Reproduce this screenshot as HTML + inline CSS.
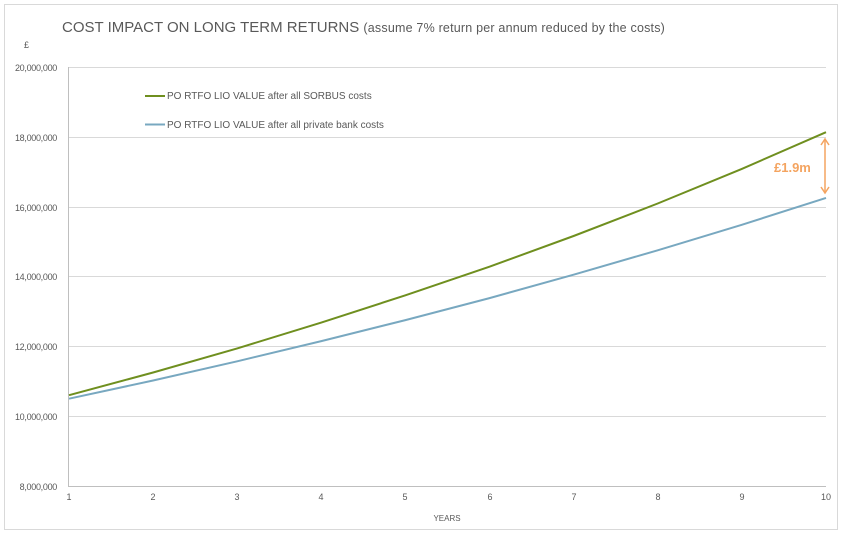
<!DOCTYPE html>
<html><head><style>
body{margin:0;width:842px;height:535px;background:#fff;overflow:hidden}
svg{display:block}
text{font-family:"Liberation Sans",sans-serif}
</style></head><body>
<svg width="842" height="535" viewBox="0 0 842 535">
<rect x="4.5" y="4.5" width="833" height="525" fill="#fff" stroke="#d9d9d9"/>
<text x="62" y="32" font-size="15" fill="#595959">COST IMPACT ON LONG TERM RETURNS <tspan font-size="12.5" letter-spacing="0.2">(assume 7% return per annum reduced by the costs)</tspan></text>
<text x="24" y="48" font-size="9" fill="#595959">£</text>
<g stroke="#d9d9d9" stroke-width="1">
<line x1="68" y1="67.5" x2="826" y2="67.5"/>
<line x1="68" y1="137.5" x2="826" y2="137.5"/>
<line x1="68" y1="207.5" x2="826" y2="207.5"/>
<line x1="68" y1="276.5" x2="826" y2="276.5"/>
<line x1="68" y1="346.5" x2="826" y2="346.5"/>
<line x1="68" y1="416.5" x2="826" y2="416.5"/>
</g>
<line x1="68.5" y1="67" x2="68.5" y2="486" stroke="#bfbfbf"/>
<line x1="68" y1="486.5" x2="826" y2="486.5" stroke="#bfbfbf"/>
<g font-size="9" fill="#595959" text-anchor="end" letter-spacing="-0.3">
<text x="57" y="71">20,000,000</text>
<text x="57" y="141">18,000,000</text>
<text x="57" y="211">16,000,000</text>
<text x="57" y="280">14,000,000</text>
<text x="57" y="350">12,000,000</text>
<text x="57" y="420">10,000,000</text>
<text x="57" y="490">8,000,000</text>
</g>
<g font-size="9" fill="#595959" text-anchor="middle">
<text x="69" y="500">1</text><text x="153" y="500">2</text><text x="237" y="500">3</text><text x="321" y="500">4</text><text x="405" y="500">5</text><text x="490" y="500">6</text><text x="574" y="500">7</text><text x="658" y="500">8</text><text x="742" y="500">9</text><text x="826" y="500">10</text>
<text x="447" y="521" font-size="8">YEARS</text>
</g>
<polyline fill="none" stroke="#6f8f1f" stroke-width="2" points="69,395.2 153.1,372.5 237.2,348.4 321.3,322.6 405.4,295.3 489.5,266.7 573.6,236 657.7,203.5 741.8,168.9 826,132.2"/>
<polyline fill="none" stroke="#78a8c0" stroke-width="2" points="69,398.7 153.1,380.5 237.2,361.3 321.3,341.1 405.4,320.1 489.5,298.1 573.6,274.7 657.7,250.3 741.8,224.8 826,197.9"/>
<line x1="145" y1="96" x2="165" y2="96" stroke="#6f8f1f" stroke-width="2"/>
<line x1="145" y1="124.5" x2="165" y2="124.5" stroke="#78a8c0" stroke-width="2"/>
<text x="167" y="99" font-size="10" fill="#595959">PO RTFO LIO  VALUE after all SORBUS costs</text>
<text x="167" y="128" font-size="10" fill="#595959">PO RTFO LIO  VALUE after all private bank costs</text>
<g stroke="#f4a460" stroke-width="1.5" fill="none">
<line x1="825" y1="140" x2="825" y2="192"/>
<polyline points="821,145 825,139 829,145"/>
<polyline points="821,187 825,193 829,187"/>
</g>
<text x="774" y="172" font-size="13" font-weight="bold" fill="#f4a460">£1.9m</text>
</svg>
</body></html>
